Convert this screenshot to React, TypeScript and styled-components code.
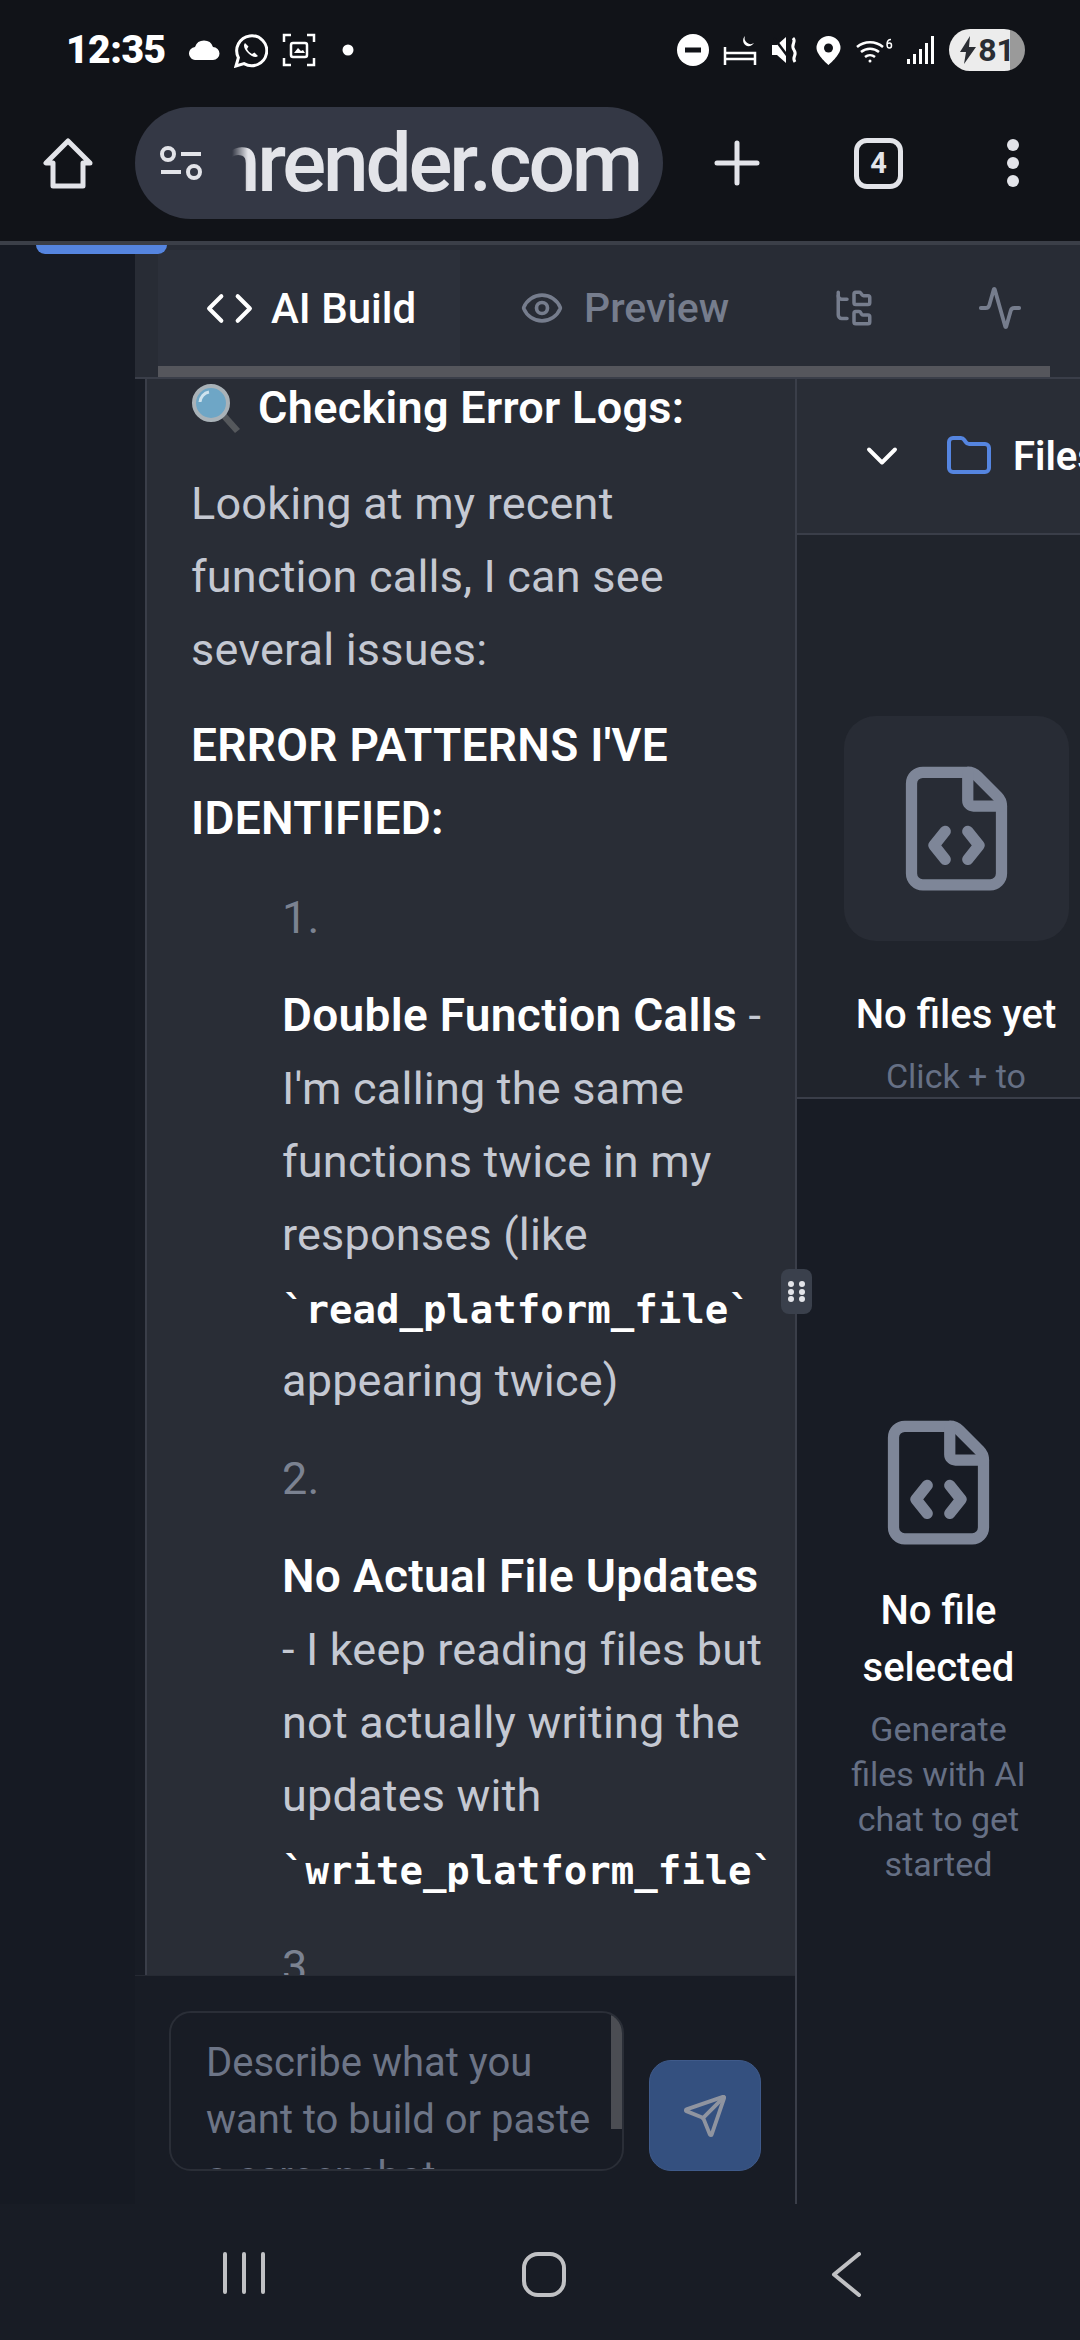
import styled, { createGlobalStyle } from 'styled-components';
import { Activity, ChevronDown, Code, Eye, FileCode, Folder, FolderTree, Send } from 'lucide-react';

const GlobalStyle = createGlobalStyle`
  html, body {
    margin: 0;
    padding: 0;
    background: #181c25;
  }
  * {
    box-sizing: border-box;
  }
`;

const sans = `Roboto, "Noto Sans", sans-serif`;

const Screen = styled.div`
  width: 1080px;
  height: 2340px;
  overflow: hidden;
  display: flex;
  flex-direction: column;
  background: #181c25;
  font-family: ${sans};
`;

const Chrome = styled.header`
  height: 245px;
  flex: none;
  background: #111318;
  border-bottom: 4px solid #3b3f48;
`;

const StatusBar = styled.div`
  height: 107px;
  padding: 29px 55px 36px 66px;
  display: flex;
  align-items: center;
  justify-content: space-between;
  color: #fff;
`;

const StatusGroup = styled.div`
  display: flex;
  align-items: center;
  gap: 14px;
`;

const Clock = styled.span`
  width: 102px;
  font-size: 39px;
  font-weight: 900;
  letter-spacing: -0.5px;
  line-height: 42px;
`;

const Battery = styled.div`
  width: 76px;
  height: 42px;
  border-radius: 21px;
  display: flex;
  align-items: center;
  justify-content: center;
  gap: 1px;
  color: #2a2d33;
  font-size: 32px;
  font-weight: 700;
  background: linear-gradient(90deg, #ececec 0 80%, #9a9a9a 80% 100%);
`;

const Toolbar = styled.div`
  height: 112px;
  padding-left: 43px;
  display: flex;
  align-items: center;
`;

const UrlPill = styled.div`
  width: 528px;
  height: 112px;
  margin-left: 42px;
  padding: 0 23px 0 25px;
  border-radius: 56px;
  background: #343845;
  display: flex;
  align-items: center;
`;

const UrlClip = styled.div`
  flex: 1;
  margin-left: 30px;
  overflow: hidden;
  display: flex;
  justify-content: flex-end;
  mask-image: linear-gradient(90deg, transparent 0, #000 16px);
`;

const UrlText = styled.span`
  color: #e3e4e9;
  font-size: 82px;
  font-weight: 500;
  letter-spacing: -3.2px;
  line-height: 112px;
  white-space: nowrap;
`;

const TabCount = styled.div`
  width: 49px;
  height: 51px;
  margin-left: 94px;
  border: 5px solid #e3e4e9;
  border-radius: 13px;
  display: flex;
  align-items: center;
  justify-content: center;
  color: #e3e4e9;
  font-size: 29px;
  font-weight: 700;
`;

const PlusIcon = styled.svg`
  margin-left: 51px;
`;

const MoreIcon = styled.svg`
  margin-left: 103px;
`;

const Main = styled.div`
  position: relative;
  height: 1959px;
  flex: none;
  display: flex;
`;

const BluePeek = styled.div`
  position: absolute;
  top: 0;
  left: 36px;
  width: 131px;
  height: 9px;
  background: #5585e0;
  border-radius: 0 0 12px 12px;
`;

const Sidebar = styled.aside`
  width: 135px;
  flex: none;
  background: #161a23;
`;

const Workspace = styled.div`
  flex: 1;
  min-width: 0;
  display: flex;
  flex-direction: column;
`;

const TabBar = styled.nav`
  height: 134px;
  flex: none;
  padding-left: 23px;
  background: #282c35;
  border-bottom: 2px solid #3a3e49;
`;

const TabRow = styled.div`
  height: 121px;
  padding-top: 5px;
  display: flex;
  align-items: stretch;
`;

const Tab = styled.div<{ $active?: boolean }>`
  width: ${(p) => (p.$active ? '302px' : 'auto')};
  padding-left: ${(p) => (p.$active ? '47px' : '60px')};
  display: flex;
  align-items: center;
  gap: ${(p) => (p.$active ? '17px' : '20px')};
  font-size: ${(p) => (p.$active ? '42px' : '41px')};
  font-weight: 500;
  color: ${(p) => (p.$active ? '#ffffff' : '#767d8d')};
  background: ${(p) => (p.$active ? '#2c303a' : 'transparent')};
`;

const IconTab = styled.div<{ $gap: number }>`
  margin-left: ${(p) => p.$gap}px;
  display: flex;
  align-items: center;
  color: #767d8d;
`;

const TabScroll = styled.div`
  width: 892px;
  height: 11px;
  background: #55565c;
`;

const Split = styled.div`
  position: relative;
  height: 1825px;
  flex: none;
  display: flex;
`;

const DragHandle = styled.div`
  position: absolute;
  left: 646px;
  top: 890px;
  width: 31px;
  height: 45px;
  padding: 12px 7px;
  display: grid;
  grid-template-columns: 6px 6px;
  grid-auto-rows: 6px;
  justify-content: space-between;
  align-content: space-between;
  border-radius: 8px;
  background: #3a404c;
`;

const HandleDot = styled.span`
  border-radius: 50%;
  background: #e3e4e9;
`;

const ChatColumn = styled.section`
  width: 662px;
  flex: none;
  display: flex;
  flex-direction: column;
  border-right: 2px solid #3a3e49;
`;

const ChatScroll = styled.div`
  height: 1596px;
  flex: none;
  margin-left: 10px;
  padding: 0 0 0 44px;
  overflow: hidden;
  background: #292d36;
  border-left: 2px solid #3a3e49;
  font-size: 45px;
  letter-spacing: 0.2px;
  line-height: 73px;
  color: #c4c8d2;
  white-space: nowrap;
`;

const Heading = styled.h3`
  display: flex;
  align-items: center;
  gap: 17px;
  margin: -8px 0 23px;
  font-size: 45px;
  font-weight: 600;
  letter-spacing: 0.3px;
  line-height: 73px;
  color: #fff;
`;

const Para = styled.p`
  margin: 0 0 23px;
`;

const Strong = styled.strong`
  font-size: 46px;
  font-weight: 600;
  letter-spacing: 0.3px;
  color: #fff;
`;

const StepList = styled.div`
  margin-top: 26px;
  padding-left: 91px;
`;

const Marker = styled.div`
  margin-bottom: 25px;
  color: #7b8291;
`;

const Step = styled.p`
  margin: 0 0 25px;
`;

const CodeText = styled.code`
  font-family: "DejaVu Sans Mono", "Liberation Mono", monospace;
  font-size: 39px;
  font-weight: 700;
  letter-spacing: 0;
  line-height: 0;
  color: #fff;
`;

const Composer = styled.div`
  flex: 1;
  padding: 35px 34px 0;
  display: flex;
  align-items: flex-start;
  gap: 25px;
  background: #181c25;
  border-top: 1px solid #262a33;
`;

const InputBox = styled.div`
  position: relative;
  width: 455px;
  height: 160px;
  flex: none;
  padding: 21px 0 0 35px;
  overflow: hidden;
  border: 2px solid #2a2e37;
  border-radius: 22px;
  font-size: 40px;
  line-height: 57px;
  color: #6d7587;
  white-space: nowrap;
`;

const InputScroll = styled.div`
  position: absolute;
  top: 0;
  right: 0;
  width: 11px;
  height: 116px;
  background: #4b4d53;
`;

const SendButton = styled.button`
  width: 112px;
  height: 111px;
  margin-top: 49px;
  flex: none;
  padding: 0;
  display: flex;
  align-items: center;
  justify-content: center;
  background: #34507f;
  border: 1px solid #3f5a8a;
  border-radius: 22px;
  color: #8f94a0;
`;

const FilesColumn = styled.section`
  flex: 1;
  min-width: 0;
  display: flex;
  flex-direction: column;
`;

const FilesPanel = styled.div`
  height: 720px;
  flex: none;
  overflow: hidden;
  background: #20242c;
  border-bottom: 2px solid #3a3e49;
`;

const FilesHeader = styled.div`
  height: 156px;
  padding-left: 59px;
  display: flex;
  align-items: center;
  background: #292d36;
  border-bottom: 2px solid #3a3e49;
  color: #fff;
  font-size: 40px;
  font-weight: 600;
  white-space: nowrap;
  overflow: hidden;
  svg {
    flex: none;
  }
`;

const FolderIcon = styled(Folder)`
  margin: 0 20px 0 37px;
  color: #5585e0;
`;

const FilesEmpty = styled.div`
  width: 318px;
  padding-top: 181px;
  display: flex;
  flex-direction: column;
  align-items: center;
`;

const IconCard = styled.div`
  width: 225px;
  height: 225px;
  border-radius: 32px;
  display: flex;
  align-items: center;
  justify-content: center;
  background: #282c35;
  color: #7e8698;
`;

const EmptyTitle = styled.div`
  margin-top: 49px;
  font-size: 40px;
  font-weight: 500;
  line-height: 50px;
  color: #fff;
`;

const EmptyHint = styled.div`
  margin-top: 14px;
  font-size: 34px;
  line-height: 45px;
  color: #667085;
`;

const EditorEmpty = styled.div`
  flex: 1;
  padding-top: 316px;
  display: flex;
  flex-direction: column;
  align-items: center;
  text-align: center;
  color: #7e8698;
`;

const EditorTitle = styled.div`
  margin-top: 32px;
  font-size: 40px;
  font-weight: 500;
  line-height: 57px;
  color: #fff;
`;

const EditorHint = styled.div`
  margin-top: 11px;
  font-size: 34px;
  line-height: 45px;
  color: #667085;
`;

const NavBar = styled.div`
  flex: 1;
  min-height: 0;
  padding: 48px 0 0 223px;
  display: flex;
  align-items: flex-start;
  gap: 257px;
  background: #181c25;
`;

const NavHome = styled.div`
  width: 44px;
  height: 45px;
  border: 4px solid #c0c1c4;
  border-radius: 16px;
`;

const NavBack = styled.svg`
  margin-left: 8px;
`;

const Tune = () => (
  <svg width="42" height="36" viewBox="0 0 42 36" fill="none" stroke="#e3e4e9" strokeWidth="4" style={{ flex: 'none' }}>
    <circle cx="8" cy="9" r="6" />
    <path d="M21 9h20M1 27h20" />
    <circle cx="34" cy="27" r="6" />
  </svg>
);

const Magnifier = () => (
  <svg width="50" height="50" viewBox="0 0 50 50" style={{ flex: 'none', marginTop: 2 }}>
    <path d="M27 30 L44 49 L49 45 L32 26z" fill="#55585c" />
    <circle cx="20" cy="19" r="17" fill="#6ea6c6" stroke="#a9b2b8" strokeWidth="4" />
    <path d="M9 18a11 11 0 0 1 9-10" stroke="#cfe3ee" strokeWidth="3" fill="none" />
  </svg>
);

const StatusIcons = {
  cloud: (
    <svg width="31" height="20" viewBox="0 0 31 20" fill="#fff" style={{ marginLeft: 7 }}>
      <path d="M7 20a6.5 6.5 0 0 1-1-13A9.5 9.5 0 0 1 24 7a6.5 6.5 0 0 1 0 13z" />
    </svg>
  ),
  whatsapp: (
    <svg width="34" height="35" viewBox="0 0 34 35" fill="none" stroke="#fff" strokeWidth="3">
      <path d="M2 33l2.4-8.4A15 15 0 1 1 10 30.6z" />
      <path d="M11 10c-2 2-1 6 3 10s8 5 10 3l-3.500-3.500-2.500 1.500c-2-1-4-3-5-5l1.500-2.500z" fill="#fff" stroke="none" />
    </svg>
  ),
  capture: (
    <svg width="34" height="34" viewBox="0 0 34 34" fill="none" stroke="#fff" strokeWidth="2.500">
      <path d="M9 2H2v7M25 2h7v7M9 32H2v-7M25 32h7v-7" />
      <rect x="9" y="10" width="16" height="14" rx="2" />
      <path d="M12 20l4-5 3 3 2-1 2 3z" fill="#fff" stroke="none" />
    </svg>
  ),
  dot: (
    <svg width="12" height="12" viewBox="0 0 12 12" fill="#fff" style={{ marginLeft: 12 }}>
      <circle cx="6" cy="6" r="5.500" />
    </svg>
  ),
  dnd: (
    <svg width="32" height="32" viewBox="0 0 32 32">
      <circle cx="16" cy="16" r="16" fill="#fff" />
      <rect x="8" y="13.500" width="16" height="5" fill="#111318" />
    </svg>
  ),
  bed: (
    <svg width="34" height="30" viewBox="0 0 34 30" fill="none" stroke="#fff" strokeWidth="2.500">
      <path d="M2 12v18M2 24h30v6M2 18h30v6" />
      <path d="M22 1a6 6 0 0 0 2 10 7 7 0 0 0 7-3 6 6 0 0 1-9-7z" fill="#fff" stroke="none" />
    </svg>
  ),
  mute: (
    <svg width="30" height="28" viewBox="0 0 30 28" fill="#fff">
      <path d="M1 9h5l9-8v26l-9-8H1z" />
      <path d="M3 2l18 24" fill="none" stroke="#111318" strokeWidth="2.500" />
      <path d="M22 2c4 4-3 6 1 12s-3 6 1 12" fill="none" stroke="#fff" strokeWidth="3" />
    </svg>
  ),
  pin: (
    <svg width="25" height="29" viewBox="0 0 25 29" style={{ marginLeft: 1 }}>
      <path d="M12.500 0A12 12 0 0 1 24.500 12c0 7-12 17-12 17S.5 19 .5 12A12 12 0 0 1 12.500 0z" fill="#fff" />
      <circle cx="12.500" cy="12" r="4.500" fill="#111318" />
    </svg>
  ),
  wifi: (
    <svg width="38" height="25" viewBox="0 0 38 25" fill="none" stroke="#fff" strokeWidth="2.500">
      <path d="M2 9a20 20 0 0 1 26 0M6 14a14 14 0 0 1 18 0M10 19a8 8 0 0 1 10 0" />
      <circle cx="15" cy="23" r="1.500" fill="#fff" stroke="none" />
      <path d="M36 1.500c-3 0-4 2-4 5s1 3.500 2.500 3.500 2-1 2-2.500-1-2.500-2-2.500-2 .5-2.500 1.500" strokeWidth="1.500" />
    </svg>
  ),
  signal: (
    <svg width="28" height="28" viewBox="0 0 28 28" fill="#fff">
      <rect x="0" y="23" width="3" height="5" />
      <rect x="6" y="18" width="3" height="10" />
      <rect x="12" y="13" width="3" height="15" />
      <rect x="18" y="7" width="3" height="21" />
      <rect x="24" y="0" width="3" height="28" />
    </svg>
  ),
};

const App = () => {
  return (
    <Screen>
      <GlobalStyle />
      <Chrome>
        <StatusBar>
          <StatusGroup>
            <Clock>12:35</Clock>
            {StatusIcons.cloud}
            {StatusIcons.whatsapp}
            {StatusIcons.capture}
            {StatusIcons.dot}
          </StatusGroup>
          <StatusGroup>
            {StatusIcons.dnd}
            {StatusIcons.bed}
            {StatusIcons.mute}
            {StatusIcons.pin}
            {StatusIcons.wifi}
            {StatusIcons.signal}
            <Battery>
              <svg width="18" height="28" viewBox="0 0 18 28" fill="#2a2d33">
                <path d="M11 0L1 16h6l-2 12L17 11h-7z" />
              </svg>
              81
            </Battery>
          </StatusGroup>
        </StatusBar>
        <Toolbar>
          <svg width="50" height="51" viewBox="0 0 50 51" fill="none" stroke="#e3e4e9" strokeWidth="5" strokeLinejoin="round">
            <path d="M25 3L3 25h7v23h30V25h7z" />
          </svg>
          <UrlPill>
            <Tune />
            <UrlClip>
              <UrlText>onrender.com</UrlText>
            </UrlClip>
          </UrlPill>
          <PlusIcon width="46" height="46" viewBox="0 0 46 46" stroke="#e3e4e9" strokeWidth="5" strokeLinecap="round">
            <path d="M23 3v40M3 23h40" />
          </PlusIcon>
          <TabCount>4</TabCount>
          <MoreIcon width="14" height="50" viewBox="0 0 14 50" fill="#e3e4e9">
            <circle cx="7" cy="7" r="6" />
            <circle cx="7" cy="25" r="6" />
            <circle cx="7" cy="43" r="6" />
          </MoreIcon>
        </Toolbar>
      </Chrome>
      <Main>
        <BluePeek />
        <Sidebar />
        <Workspace>
          <TabBar>
            <TabRow>
              <Tab $active>
                <Code size={49} strokeWidth={2} />
                AI Build
              </Tab>
              <Tab>
                <Eye size={44} strokeWidth={2} />
                Preview
              </Tab>
              <IconTab $gap={104}>
                <FolderTree size={42} strokeWidth={2} />
              </IconTab>
              <IconTab $gap={102}>
                <Activity size={46} strokeWidth={2} />
              </IconTab>
            </TabRow>
            <TabScroll />
          </TabBar>
          <Split>
            <ChatColumn>
              <ChatScroll>
                <Heading>
                  <Magnifier />
                  Checking Error Logs:
                </Heading>
                <Para>
                  Looking at my recent
                  <br />
                  function calls, I can see
                  <br />
                  several issues:
                </Para>
                <Para>
                  <Strong>
                    ERROR PATTERNS I'VE
                    <br />
                    IDENTIFIED:
                  </Strong>
                </Para>
                <StepList>
                  <Marker>1.</Marker>
                  <Step>
                    <Strong>Double Function Calls</Strong> -
                    <br />
                    I'm calling the same
                    <br />
                    functions twice in my
                    <br />
                    responses (like
                    <br />
                    <CodeText>`read_platform_file`</CodeText>
                    <br />
                    appearing twice)
                  </Step>
                  <Marker>2.</Marker>
                  <Step>
                    <Strong>No Actual File Updates</Strong>
                    <br />
                    - I keep reading files but
                    <br />
                    not actually writing the
                    <br />
                    updates with
                    <br />
                    <CodeText>`write_platform_file`</CodeText>
                  </Step>
                  <Marker>3.</Marker>
                </StepList>
              </ChatScroll>
              <Composer>
                <InputBox>
                  Describe what you
                  <br />
                  want to build or paste
                  <br />
                  a screenshot
                  <InputScroll />
                </InputBox>
                <SendButton type="button">
                  <Send size={46} strokeWidth={2} />
                </SendButton>
              </Composer>
            </ChatColumn>
            <FilesColumn>
              <FilesPanel>
                <FilesHeader>
                  <ChevronDown size={52} strokeWidth={1.800} />
                  <FolderIcon size={48} strokeWidth={2} />
                  Files
                </FilesHeader>
                <FilesEmpty>
                  <IconCard>
                    <FileCode size={135} strokeWidth={2} />
                  </IconCard>
                  <EmptyTitle>No files yet</EmptyTitle>
                  <EmptyHint>Click + to</EmptyHint>
                </FilesEmpty>
              </FilesPanel>
              <EditorEmpty>
                <FileCode size={135} strokeWidth={2} />
                <EditorTitle>
                  No file
                  <br />
                  selected
                </EditorTitle>
                <EditorHint>
                  Generate
                  <br />
                  files with AI
                  <br />
                  chat to get
                  <br />
                  started
                </EditorHint>
              </EditorEmpty>
            </FilesColumn>
            <DragHandle>
              {[0, 1, 2, 3, 4, 5].map((dot) => (
                <HandleDot key={dot} />
              ))}
            </DragHandle>
          </Split>
        </Workspace>
      </Main>
      <NavBar>
        <svg width="42" height="42" viewBox="0 0 42 42" stroke="#c0c1c4" strokeWidth="4" strokeLinecap="round">
          <path d="M2 2v38M21 2v38M40 2v38" />
        </svg>
        <NavHome />
        <NavBack width="30" height="45" viewBox="0 0 30 45" fill="none" stroke="#c0c1c4" strokeWidth="4" strokeLinecap="round" strokeLinejoin="round">
          <path d="M28 2L3 22.500 28 43" />
        </NavBack>
      </NavBar>
    </Screen>
  );
};

export default App;
